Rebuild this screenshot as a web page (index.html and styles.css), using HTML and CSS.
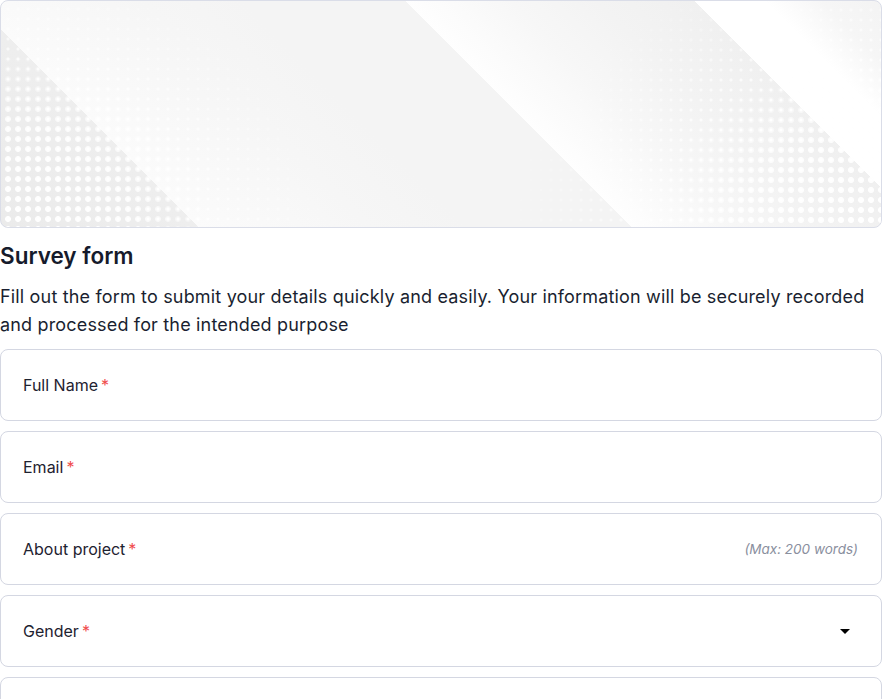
FILE: index.html
```html
<!DOCTYPE html>
<html lang="en">
<head>
<meta charset="utf-8">
<title>Survey form</title>
<link rel="stylesheet" href="styles.css">
</head>
<body>
<main class="page">
  <div class="banner">
    <div class="dots dots-left-big"></div>
    <div class="dots dots-left-small"></div>
    <div class="dots dots-right-big"></div>
    <div class="dots dots-right-small"></div>
  </div>
  <h1 class="title">Survey form</h1>
  <p class="desc">Fill out the form to submit your details quickly and easily. Your information will be securely recorded and processed for the intended purpose</p>
  <div class="fields">
    <div class="field"><span class="label">Full Name<span class="req">*</span></span></div>
    <div class="field"><span class="label">Email<span class="req">*</span></span></div>
    <div class="field"><span class="label">About project<span class="req">*</span></span><span class="hint">(Max: 200 words)</span></div>
    <div class="field field-select"><span class="label">Gender<span class="req">*</span></span>
      <svg class="caret" width="10" height="5" viewBox="0 0 10 5"><path d="M0 0H10L5 5Z" fill="#000"/></svg>
    </div>
    <div class="field"></div>
  </div>
</main>
</body>
</html>
```
FILE: styles.css
```css
html, body {
  margin: 0;
  padding: 0;
  background: #ffffff;
}
body {
  font-family: Inter, "Noto Sans", "Liberation Sans", sans-serif;
  color: #1c2131;
  overflow: hidden;
}
.page {
  width: 882px;
  display: flex;
  flex-direction: column;
}
.banner {
  position: relative;
  height: 228px;
  box-sizing: border-box;
  border: 1px solid #dadde8;
  border-radius: 8px;
  overflow: hidden;
  background: linear-gradient(45deg,
    #ebebeb 0px, #eeeeee 140px,
    #fbfbfb 140px, #f6f6f6 260px, #f4f4f4 330px,
    #f4f4f4 446px,
    #fefefe 446px, #f7f7f7 520px, #f3f3f3 580px,
    #f0f0f0 650px,
    #ffffff 650px, #ffffff 700px, #f6f6f6 740px, #f3f3f3 790px);
}
.dots {
  position: absolute;
  inset: 0;
}
.dots-left-big {
  background-image: radial-gradient(circle, #ffffff 2.6px, rgba(255,255,255,0) 3.3px);
  background-size: 10px 10px;
  background-position: 2px 3px;
  -webkit-mask-image: radial-gradient(ellipse 290px 230px at 0% 100%, #000 0%, rgba(0,0,0,0.8) 45%, rgba(0,0,0,0) 78%);
  mask-image: radial-gradient(ellipse 290px 230px at 0% 100%, #000 0%, rgba(0,0,0,0.8) 45%, rgba(0,0,0,0) 78%);
}
.dots-left-small {
  background-image: radial-gradient(circle, #ffffff 1.2px, rgba(255,255,255,0) 1.9px);
  background-size: 10px 10px;
  background-position: 2px 3px;
  -webkit-mask-image: radial-gradient(ellipse 340px 280px at 0% 100%, #000 0%, rgba(0,0,0,0.9) 50%, rgba(0,0,0,0) 100%);
  mask-image: radial-gradient(ellipse 340px 280px at 0% 100%, #000 0%, rgba(0,0,0,0.9) 50%, rgba(0,0,0,0) 100%);
}
.dots-right-big {
  background-image: radial-gradient(circle, #ffffff 2.7px, rgba(255,255,255,0) 3.4px);
  background-size: 10px 10px;
  background-position: 5px 4px;
  -webkit-mask-image: radial-gradient(ellipse 300px 220px at 100% 100%, #000 0%, rgba(0,0,0,0.8) 45%, rgba(0,0,0,0) 80%);
  mask-image: radial-gradient(ellipse 300px 220px at 100% 100%, #000 0%, rgba(0,0,0,0.8) 45%, rgba(0,0,0,0) 80%);
}
.dots-right-small {
  background-image: radial-gradient(circle, #ffffff 1.2px, rgba(255,255,255,0) 1.9px);
  background-size: 10px 10px;
  background-position: 5px 4px;
  -webkit-mask-image: radial-gradient(ellipse 380px 290px at 100% 100%, #000 0%, rgba(0,0,0,0.9) 50%, rgba(0,0,0,0) 100%);
  mask-image: radial-gradient(ellipse 380px 290px at 100% 100%, #000 0%, rgba(0,0,0,0.9) 50%, rgba(0,0,0,0) 100%);
}
.title {
  margin: 14px 0 0 0;
  font-size: 22.5px;
  line-height: 28px;
  font-weight: 600;
  color: #161b2c;
}
.desc {
  margin: 13px 0 0 0;
  font-size: 18px;
  letter-spacing: 0.17px;
  line-height: 28px;
  font-weight: 400;
  color: #1a1f30;
}
.fields {
  margin-top: 10px;
  display: flex;
  flex-direction: column;
  gap: 10px;
}
.field {
  height: 72px;
  box-sizing: border-box;
  border: 1px solid #d4d7e2;
  border-radius: 8px;
  padding: 0 23px 0 22px;
  display: flex;
  align-items: center;
  justify-content: space-between;
  background: #ffffff;
}
.field-select {
  padding-right: 31px;
}
.label {
  font-size: 16px;
  color: #1e2230;
  line-height: 20px;
}
.req {
  color: #f04c4c;
  margin-left: 3px;
}
.hint {
  font-size: 13.5px;
  font-style: italic;
  color: #8a8f9e;
}
.caret {
  display: block;
}
```
